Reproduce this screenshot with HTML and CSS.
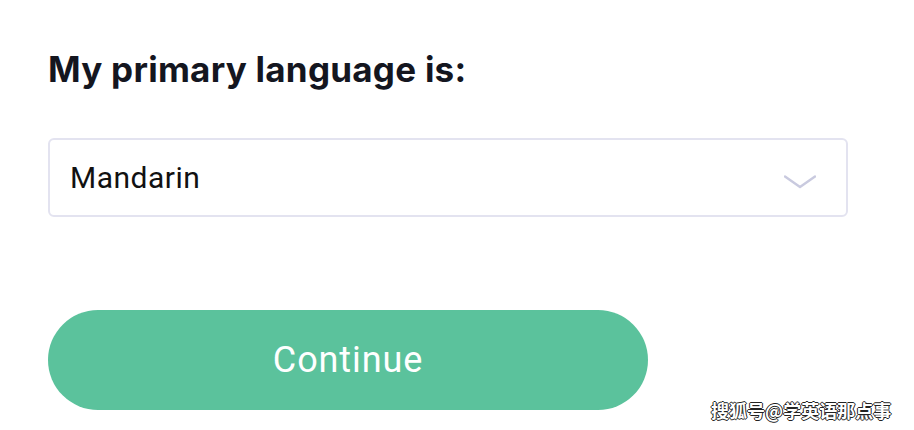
FILE: index.html
```html
<!DOCTYPE html>
<html lang="en">
<head>
    <meta charset="UTF-8">
    <title>Primary language</title>
    <link rel="stylesheet" href="styles.css">
</head>
<body>
    <div class="container">
        <h1 class="question">My primary language is:</h1>

        <div class="select-box">
            <span class="select-value">Mandarin</span>
            <svg class="chevron" width="32" height="14" viewBox="0 0 32 14">
                <polyline points="1,1.5 16,12 31,1.5" fill="none" stroke="#c9cadf" stroke-width="2.4" stroke-linecap="round" stroke-linejoin="round"/>
            </svg>
        </div>

        <button class="continue-btn">Continue</button>
    </div>

    <div class="watermark">搜狐号@学英语那点事</div>
</body>
</html>
```

FILE: styles.css
```css
body {
    margin: 0;
    padding: 0;
    background: #fff;
    font-family: Roboto, "Noto Sans", sans-serif;
}
.container {
    width: 800px;
    padding: 48px 0 0 48px;
}
.question {
    margin: 0;
    font-family: Inter, "Liberation Sans", sans-serif;
    font-weight: 700;
    font-size: 35px;
    line-height: 42px;
    color: #14161f;
    letter-spacing: 0.25px;
}
.select-box {
    margin-top: 48px;
    height: 75px;
    border: 2px solid #e3e3f0;
    border-radius: 6px;
    display: flex;
    align-items: center;
    justify-content: space-between;
    padding: 0 30px 0 20px;
}
.select-value {
    font-size: 30px;
    color: #111;
    letter-spacing: 0.5px;
}
.chevron {
    display: block;
    margin-top: 8px;
}
.continue-btn {
    display: block;
    margin-top: 93px;
    width: 600px;
    height: 100px;
    border: none;
    border-radius: 50px;
    background: #5bc29c;
    color: #fff;
    font-family: Roboto, "Noto Sans", sans-serif;
    font-size: 36px;
    letter-spacing: 0.9px;
    cursor: pointer;
}
.watermark {
    position: absolute;
    left: 711px;
    top: 398px;
    font-family: "Noto Sans CJK SC", sans-serif;
    font-size: 18px;
    font-weight: 700;
    line-height: 24px;
    color: #fff;
    text-shadow: 1px 0 0 #222, -1px 0 0 #222, 0 1px 0 #222, 0 -1px 0 #222;
}
```
